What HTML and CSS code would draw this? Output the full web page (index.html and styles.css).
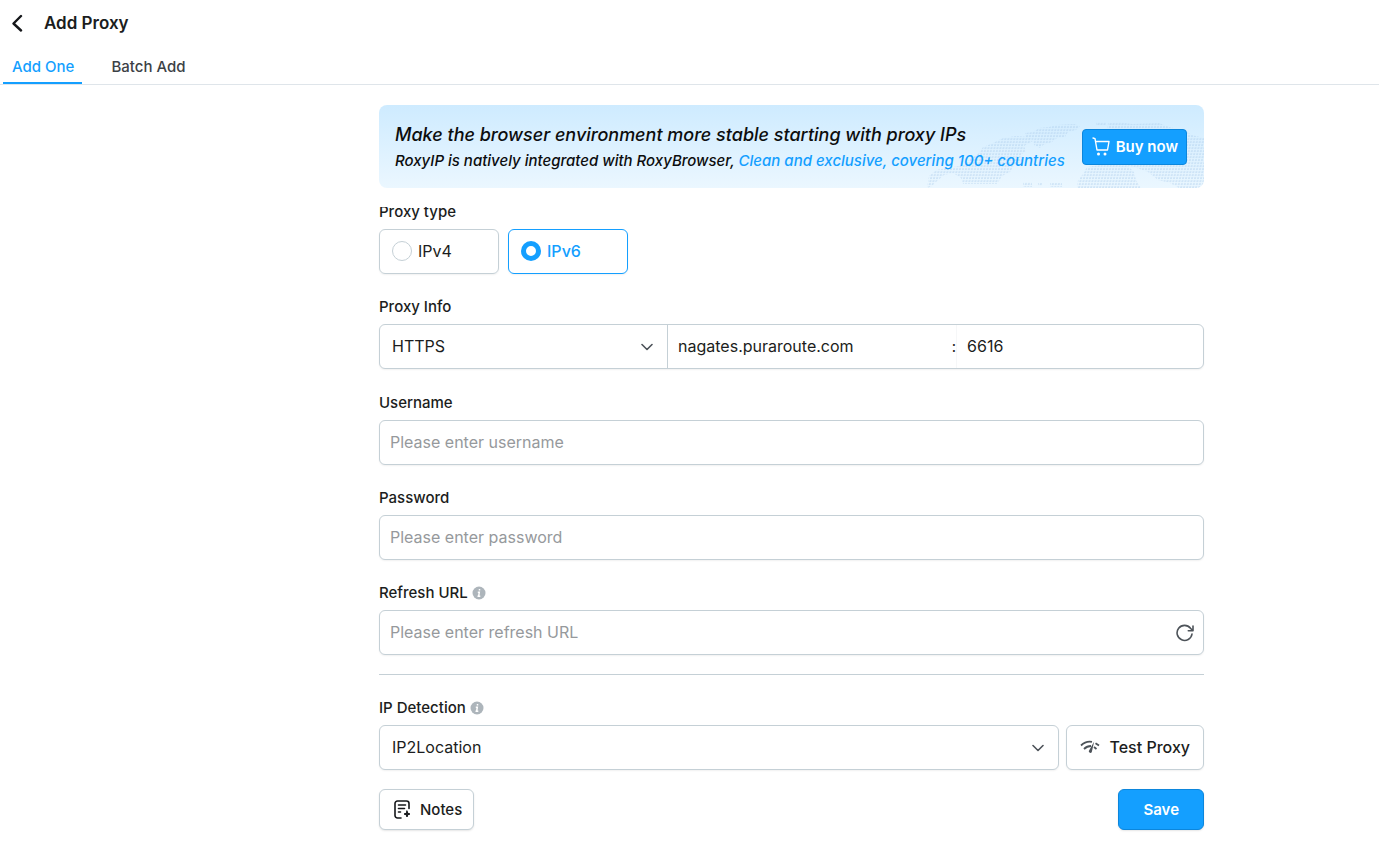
FILE: index.html
```html
<!DOCTYPE html>
<html lang="en">
<head>
  <meta charset="UTF-8">
  <meta name="viewport" content="width=device-width, initial-scale=1.0">
  <title>Add Proxy</title>
  <link rel="stylesheet" href="styles.css">
</head>
<body>

<header class="page-header">
  <button class="back-btn" type="button" aria-label="Back">
    <svg width="12" height="18" viewBox="0 0 12 18" fill="none" stroke="#15171a" stroke-width="2.4" stroke-linecap="round" stroke-linejoin="round"><path d="M9 2L1.500 9.500l7.500 7"/></svg>
  </button>
  <h1>Add Proxy</h1>
</header>

<nav class="tabs">
  <a class="tab active" href="#one">Add One</a>
  <a class="tab" href="#batch">Batch Add</a>
</nav>

<main class="content">
  <section class="banner">
    <!-- dotted world map -->
    <svg class="banner-map" width="280" height="66" viewBox="0 0 280 66">
      <defs>
        <pattern id="dots" width="3" height="3" patternUnits="userSpaceOnUse" patternTransform="skewX(-12)">
          <rect width="2" height="2" y="1" fill="#a9cbea" opacity="0.4"/>
        </pattern>
      </defs>
      <g fill="url(#dots)">
        <path d="M3 66l2-12 7-6 12-2 16-3 6-6 8-5 5-7 8-3 12-6 13-2 12 1 5 4-9 5 2 5-5 4 2 6-8 3-5 8-8 4-5 8H39l-2-6-8-5-9 2-7 6-5 5z"/>
        <path d="M101 11l8-1 6-4 10-1 7-2 18-1 6 2-4 4-8 2-3 5-8 1-5 4-9 3-3 3-6-3-1-5-8-3z"/>
        <path d="M99 60h9v5h-9zM114 61h4v3h-4zM126 61h12v4h-12z"/>
        <path d="M153 66l1-8 5-6 4-7 20-3 21 2 6 6 2 8 5 8z"/>
        <path d="M172 0h10v3h-10zM184 1l12-1 12 2 27-1 10 4 15 3 8 5 12 3v50h-25l-9-5-12-3-10-8-14-5-30-5z"/>
      </g>
    </svg>
    <div class="banner-text">
      <p class="banner-title">Make the browser environment more stable starting with proxy IPs</p>
      <p class="banner-sub">RoxyIP is natively integrated with RoxyBrowser, <span>Clean and exclusive, covering 100+ countries</span></p>
    </div>
    <button class="buy-btn" type="button">
      <svg width="18" height="19" viewBox="0 0 18 19" fill="none" stroke="#fff" stroke-width="1.4" stroke-linecap="round" stroke-linejoin="round"><path d="M1 1l2 .7 2 11.300h10.500l1.500-8.500H3.500"/><circle cx="6.500" cy="17" r=".8" fill="#fff"/><circle cx="13" cy="17" r=".8" fill="#fff"/></svg>
      Buy now
    </button>
  </section>

  <form class="proxy-form">
    <div class="field" role="radiogroup" aria-labelledby="type-label">
      <div class="label" id="type-label">Proxy type</div>
      <div class="radio-row">
        <label class="radio-box"><input type="radio" name="type" value="4"><span>IPv4</span></label>
        <label class="radio-box"><input type="radio" name="type" value="6" checked><span>IPv6</span></label>
      </div>
    </div>

    <div class="field info-field">
      <label class="label" for="protocol">Proxy Info</label>
      <div class="box info-box">
        <div class="select-wrap protocol">
          <select id="protocol">
            <option>HTTP</option>
            <option selected>HTTPS</option>
            <option>SOCKS5</option>
          </select>
          <svg class="chevron" width="12" height="8" viewBox="0 0 12 8"><path d="M1 1.500l5 5 5-5"/></svg>
        </div>
        <input class="host" type="text" aria-label="Host" value="nagates.puraroute.com">
        <span class="colon">:</span>
        <input class="port" type="text" aria-label="Port" value="6616">
      </div>
    </div>

    <div class="field">
      <label class="label" for="username">Username</label>
      <div class="box"><input id="username" type="text" placeholder="Please enter username"></div>
    </div>

    <div class="field">
      <label class="label" for="password">Password</label>
      <div class="box"><input id="password" type="text" placeholder="Please enter password"></div>
    </div>

    <div class="field">
      <label class="label" for="refresh">Refresh URL
        <svg class="info" width="14" height="14" viewBox="0 0 14 14"><circle cx="7" cy="7" r="6.500" fill="#adb5bb"/><path d="M7.500 3v1.500M5.800 6.300h1.500L6.700 10M5.500 10.200h2.800" stroke="#fff" stroke-width="1.500" fill="none"/></svg>
      </label>
      <div class="box">
        <input id="refresh" type="text" placeholder="Please enter refresh URL">
        <button class="refresh-btn" type="button" aria-label="Refresh">
          <svg width="18" height="18" viewBox="0 0 18 18" fill="none" stroke="#4d5359" stroke-width="1.600" stroke-linecap="round" stroke-linejoin="round"><path d="M16 10A7.500 7.500 0 1 1 14.500 4.300L16.500 6.500M17 2v4.700h-4.700"/></svg>
        </button>
      </div>
    </div>

    <hr>

    <div class="field detection">
      <label class="label" for="detection">IP Detection
        <svg class="info" width="14" height="14" viewBox="0 0 14 14"><circle cx="7" cy="7" r="6.500" fill="#adb5bb"/><path d="M7.500 3v1.500M5.800 6.300h1.500L6.700 10M5.500 10.200h2.800" stroke="#fff" stroke-width="1.500" fill="none"/></svg>
      </label>
      <div class="detection-row">
        <div class="box select-wrap">
          <select id="detection">
            <option>IP2Location</option>
          </select>
          <svg class="chevron" width="12" height="8" viewBox="0 0 12 8"><path d="M1 1.500l5 5 5-5"/></svg>
        </div>
        <button class="box test-btn" type="button">
          <svg width="20" height="16" viewBox="0 0 20 16" fill="none" stroke="#4d5359" stroke-width="1.800"><path d="M1 6.500C4 3.500 8 2 12 2.800M4 10c2-2 4-3 7-3M15.500 4.200l3.500 2.300M14 8l2.500 2"/><path d="M14.200 2.500L11.800 13a1.600 1.600 0 0 1-3-1z" fill="#4d5359" stroke="none"/></svg>
          Test Proxy
        </button>
      </div>
    </div>

    <div class="actions">
      <button class="notes-btn" type="button">
        <svg width="17" height="19" viewBox="0 0 17 19" fill="none" stroke="#15171a" stroke-width="1.600" stroke-linecap="round" stroke-linejoin="round"><path d="M15 8.500V3.500A2.500 2.500 0 0 0 12.500 1h-9A2.500 2.500 0 0 0 1 3.500v12A2.500 2.500 0 0 0 3.500 18H7M4.500 5h7M4.500 8.500h6M4.500 12h2"/><path d="M13 11l.8 2.200 2.200.8-2.200.8L13 17l-.8-2.200L10 14l2.200-.8z" stroke-width="1"  fill="#15171a"/></svg>
        Notes
      </button>
      <button class="save-btn" type="submit">Save</button>
    </div>
  </form>
</main>

</body>
</html>
```
FILE: styles.css
```css
* {
  box-sizing: border-box;
}
body {
  margin: 0;
  background-color: #fff;
  color: #1b1d20;
  font-family: Inter, sans-serif;
  font-size: 16px;
}
button, input, select {
  font: inherit;
  color: inherit;
}
button {
  cursor: pointer;
}
.page-header {
  display: flex;
  align-items: center;
  gap: 20px;
  height: 46px;
  padding-left: 12px;
}
.page-header h1 {
  margin: 0;
  font-size: 17px;
  font-weight: 600;
}
.back-btn {
  display: flex;
  padding: 0;
  border: none;
  background: none;
}
.tabs {
  display: flex;
  gap: 20px;
  padding-left: 3px;
  border-bottom: 1px solid #dfe5ea;
}
.tab {
  height: 38px;
  padding: 0 8px 0 9px;
  border-bottom: 2px solid transparent;
  color: #3c4146;
  font-size: 15px;
  font-weight: 500;
  line-height: 42px;
  text-decoration: none;
}
.tab.active {
  border-color: #149fff;
  color: #149fff;
}
.content {
  max-width: 1029px;
  margin: 20px auto 0;
  padding-left: 204px;
}
.banner {
  position: relative;
  display: flex;
  align-items: center;
  justify-content: space-between;
  height: 83px;
  padding: 0 17px 0 16px;
  border-radius: 8px;
  background: linear-gradient(#ceebff, #ebf7ff);
  overflow: hidden;
}
.banner-map {
  position: absolute;
  right: 0;
  bottom: 0;
}
.banner-text {
  position: relative;
  color: #0c0d0e;
  font-style: italic;
  font-weight: 500;
  white-space: nowrap;
}
.banner-text p {
  margin: 0;
}
.banner-title {
  font-size: 18px;
  line-height: 28px;
}
.banner-sub {
  font-size: 15px;
  line-height: 24px;
}
.banner-sub span {
  color: #149fff;
}
.buy-btn {
  position: relative;
  display: flex;
  align-items: center;
  gap: 6px;
  height: 36px;
  padding: 0 8px 0 9px;
  border: 1px solid #0c86dc;
  border-radius: 4px;
  background-color: #149fff;
  color: #fff;
  font-size: 15px;
  font-weight: 600;
}
.proxy-form {
  margin: 19px -4px 0;
  padding: 0 4px 8px;
  overflow: hidden;
}
.field {
  margin-bottom: 23px;
}
.field:first-child {
  margin-top: -5px;
}
.info-field {
  margin-bottom: 24px;
}
.label {
  display: flex;
  align-items: center;
  gap: 4px;
  height: 20px;
  margin-bottom: 7px;
  font-size: 15px;
  font-weight: 500;
  line-height: 18px;
}
.radio-row {
  display: flex;
  gap: 9px;
}
.radio-box {
  display: flex;
  align-items: center;
  gap: 6px;
  width: 120px;
  height: 45px;
  padding: 0 0 1px 12px;
  border: 1px solid #c5d0d6;
  border-radius: 6px;
  box-shadow: 0 1px 2px rgba(0, 0, 0, 0.06);
}
.radio-box input {
  width: 20px;
  height: 20px;
  margin: 0;
  border: 1px solid #c5d0d6;
  border-radius: 50%;
  appearance: none;
}
.radio-box input:checked {
  border: 5px solid #149fff;
}
.radio-box:has(input:checked) {
  border-color: #149fff;
  color: #149fff;
  font-weight: 500;
}
.box {
  display: flex;
  align-items: center;
  height: 45px;
  border: 1px solid #c5d0d6;
  border-radius: 6px;
  background-color: #fff;
  box-shadow: 0 1px 2px rgba(0, 0, 0, 0.06);
}
.box input {
  flex: 1;
  min-width: 0;
  height: 100%;
  padding: 0 10px 2px;
  border: none;
  background: none;
  outline: none;
}
.box input::placeholder {
  color: #96999c;
}
.select-wrap {
  position: relative;
}
.select-wrap select {
  width: 100%;
  height: 100%;
  padding: 0 12px 2px;
  border: none;
  background: none;
  appearance: none;
}
.chevron {
  position: absolute;
  top: 50%;
  right: 14px;
  margin-top: -4px;
  fill: none;
  stroke: #4d5359;
  stroke-width: 1.6;
  stroke-linecap: round;
  stroke-linejoin: round;
  pointer-events: none;
}
.protocol {
  width: 35%;
  height: 100%;
  border-right: 1px solid #c5d0d6;
}
.info-box .port {
  flex: 0 0 30%;
  border-left: 1px solid #f6f7f8;
}
.colon {
  font-size: 15px;
}
.refresh-btn {
  display: flex;
  padding: 0 9px;
  border: none;
  background: none;
}
hr {
  height: 1px;
  margin: -4px 0 23px;
  border: none;
  background-color: #c5d0d6;
}
.field.detection {
  margin-bottom: 19px;
}
.detection-row {
  display: flex;
  gap: 7px;
}
.detection-row .select-wrap {
  flex: 1;
}
.test-btn {
  gap: 9px;
  padding: 0 13px 1px;
  font-weight: 500;
}
.actions {
  display: flex;
  justify-content: space-between;
}
.notes-btn, .save-btn {
  display: flex;
  align-items: center;
  height: 41px;
  border-radius: 6px;
  font-size: 15px;
  box-shadow: 0 1px 2px rgba(0, 0, 0, 0.1);
}
.notes-btn {
  gap: 9px;
  padding: 0 11px 0 14px;
  border: 1px solid #c5d0d6;
  background-color: #fff;
  font-weight: 500;
}
.save-btn {
  padding: 0 24px;
  border: 1px solid #0c86dc;
  background-color: #149fff;
  color: #fff;
  font-weight: 600;
}
```
